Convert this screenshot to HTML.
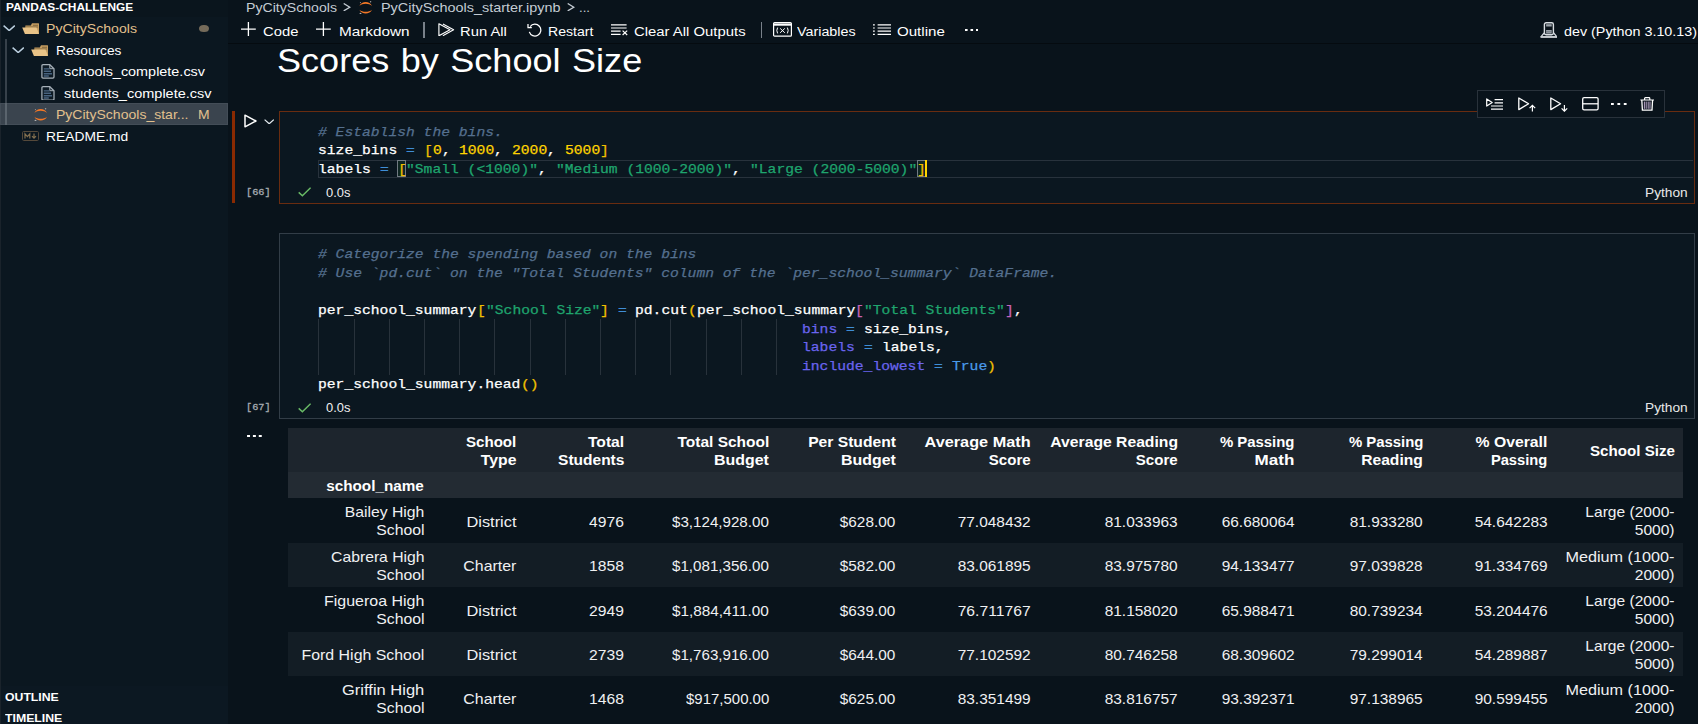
<!DOCTYPE html>
<html lang="en"><head><meta charset="utf-8"><title>PyCitySchools_starter.ipynb - pandas-challenge</title>
<style>
html,body{margin:0;padding:0;background:#09131b;}
body{width:1698px;height:724px;position:relative;overflow:hidden;font-family:"Liberation Sans",sans-serif;}
.b{position:absolute;display:block;}
.t{position:absolute;white-space:pre;display:block;}
</style></head><body>
<aside aria-label="Explorer">
<div class="b" style="left:0px;top:0px;width:228px;height:724px;background:#0b1720;"></div>
<div class="b" style="left:0px;top:0px;width:228px;height:17px;background:#0a151d;"></div>
<div class="b" style="left:0px;top:686px;width:228px;height:38px;background:#0c1822;"></div>
<div class="b" style="left:0px;top:0px;width:1px;height:724px;background:#1a232b;"></div>
<div class="b" style="left:0px;top:103px;width:228px;height:22px;background:#3a444e;border:1px solid #434d57;box-sizing:border-box;"></div>
<div class="b" style="left:5px;top:39px;width:1.8px;height:64px;background:#37414a;"></div>
<div class="b" style="left:5px;top:103px;width:1.8px;height:22px;background:#5a646d;z-index:1"></div>
<div class="b" style="left:199.3px;top:24.6px;width:9.8px;height:7.4px;background:#756b5a;border-radius:50%;"></div>
<svg class="b" style="left:2.6px;top:25px;" width="12.4" height="6.4" viewBox="0 0 12.4 6.4" fill="none"><polyline points="0.6,0.6 6.2,5.6 11.8,0.6" stroke="#bcd0e0" stroke-width="1.45" fill="none"/></svg>
<svg class="b" style="left:11.8px;top:46.5px;" width="12.4" height="6.4" viewBox="0 0 12.4 6.4" fill="none"><polyline points="0.6,0.6 6.2,5.6 11.8,0.6" stroke="#bcd0e0" stroke-width="1.45" fill="none"/></svg>
<svg class="b" style="left:21.7px;top:23px;" width="17.4" height="11.2" viewBox="0 0 17.4 11.2" fill="none"><path d="M10 0.3 H16.4 Q17.2 0.3 17.2 1.1 V10.6 H3.4 V2.6 H8.8 Z" fill="#c39c60"/><path d="M11 1.7 H16 V3 H11 Z" fill="#8f7245"/><path d="M3.6 3.6 H16 V4.4 H3.6 Z" fill="#6f5937"/><path d="M0.2 4.4 H14.4 L17.1 11 H2.9 Z" fill="#e9c387"/></svg>
<svg class="b" style="left:31px;top:44.5px;" width="17.4" height="11.2" viewBox="0 0 17.4 11.2" fill="none"><path d="M10 0.3 H16.4 Q17.2 0.3 17.2 1.1 V10.6 H3.4 V2.6 H8.8 Z" fill="#c39c60"/><path d="M11 1.7 H16 V3 H11 Z" fill="#8f7245"/><path d="M3.6 3.6 H16 V4.4 H3.6 Z" fill="#6f5937"/><path d="M0.2 4.4 H14.4 L17.1 11 H2.9 Z" fill="#e9c387"/></svg>
<svg class="b" style="left:41.1px;top:64.1px;" width="14" height="14.8" viewBox="0 0 14 14.8" fill="none"><path d="M2 0.7 H8.8 L13 4.7 V13 Q13 14.1 11.9 14.1 H2 Q0.9 14.1 0.9 13 V1.8 Q0.9 0.7 2 0.7 Z" stroke="#a6b0b8" stroke-width="1.25" fill="#0d1a24"/><path d="M8.8 0.9 V4.7 H12.8" stroke="#a6b0b8" stroke-width="1" fill="none"/><path d="M2.8 4.9 H8.6 M2.8 7.3 H10 M2.8 9.7 H11 M2.8 12 H7.8" stroke="#48637f" stroke-width="1.4"/></svg>
<svg class="b" style="left:41.1px;top:85.7px;" width="14" height="14.8" viewBox="0 0 14 14.8" fill="none"><path d="M2 0.7 H8.8 L13 4.7 V13 Q13 14.1 11.9 14.1 H2 Q0.9 14.1 0.9 13 V1.8 Q0.9 0.7 2 0.7 Z" stroke="#a6b0b8" stroke-width="1.25" fill="#0d1a24"/><path d="M8.8 0.9 V4.7 H12.8" stroke="#a6b0b8" stroke-width="1" fill="none"/><path d="M2.8 4.9 H8.6 M2.8 7.3 H10 M2.8 9.7 H11 M2.8 12 H7.8" stroke="#48637f" stroke-width="1.4"/></svg>
<svg class="b" style="left:33.6px;top:107.8px;" width="13.4" height="13.6" viewBox="0 0 13.4 13.6" fill="none"><path d="M0.4 4.9 C2.6 -0.2 10.8 -0.2 13 4.9 C10 2.2 3.4 2.2 0.4 4.9 Z" fill="#f37726"/><path d="M0.4 8.7 C2.6 13.8 10.8 13.8 13 8.7 C10 11.4 3.4 11.4 0.4 8.7 Z" fill="#f37726"/><circle cx="11.6" cy="0.8" r="0.75" fill="#9e9e9e"/><circle cx="1.5" cy="12.7" r="0.95" fill="#b0b0b0"/><circle cx="1.4" cy="1.6" r="0.55" fill="#9e9e9e"/></svg>
<svg class="b" style="left:22.2px;top:131.4px;" width="17" height="10" viewBox="0 0 17 10" fill="none"><rect x="0.5" y="0.5" width="16" height="9" rx="1.2" stroke="#55493a" stroke-width="1" fill="none"/><path d="M3 7.4 V2.8 L5.4 5.6 L7.8 2.8 V7.4" stroke="#84704f" stroke-width="1.2" fill="none"/><path d="M12 2.6 V7 M10 5.2 L12 7.2 L14 5.2" stroke="#84704f" stroke-width="1.2" fill="none"/></svg>
<span class="t" style="top:2.00px;font:700 11.2px/11.2px 'Liberation Sans',sans-serif;color:#fff;left:5.80px;transform-origin:0 0;transform:scaleX(1.0622);">PANDAS-CHALLENGE</span>
<span class="t" style="top:23.00px;font:400 12.6px/12.6px 'Liberation Sans',sans-serif;color:#e2c08d;left:46.20px;transform-origin:0 0;transform:scaleX(1.1206);">PyCitySchools</span>
<span class="t" style="top:45.00px;font:400 12.6px/12.6px 'Liberation Sans',sans-serif;color:#ffffff;left:55.60px;transform-origin:0 0;transform:scaleX(1.0863);">Resources</span>
<span class="t" style="top:66.00px;font:400 12.6px/12.6px 'Liberation Sans',sans-serif;color:#ffffff;left:64.30px;transform-origin:0 0;transform:scaleX(1.1445);">schools_complete.csv</span>
<span class="t" style="top:88.00px;font:400 12.6px/12.6px 'Liberation Sans',sans-serif;color:#ffffff;left:64.30px;transform-origin:0 0;transform:scaleX(1.1521);">students_complete.csv</span>
<span class="t" style="top:109.00px;font:400 12.6px/12.6px 'Liberation Sans',sans-serif;color:#e2c08d;left:55.60px;transform-origin:0 0;transform:scaleX(1.1134);">PyCitySchools_star...</span>
<span class="t" style="top:109.00px;font:400 12.2px/12.2px 'Liberation Sans',sans-serif;color:#e2c08d;left:197.60px;transform-origin:0 0;transform:scaleX(1.1422);">M</span>
<span class="t" style="top:131.00px;font:400 12.6px/12.6px 'Liberation Sans',sans-serif;color:#ffffff;left:46.20px;transform-origin:0 0;transform:scaleX(1.0978);">README.md</span>
<span class="t" style="top:692.00px;font:700 11.2px/11.2px 'Liberation Sans',sans-serif;color:#fff;left:5.30px;transform-origin:0 0;transform:scaleX(1.0955);">OUTLINE</span>
<span class="t" style="top:713.00px;font:700 11.2px/11.2px 'Liberation Sans',sans-serif;color:#fff;left:5.30px;transform-origin:0 0;transform:scaleX(1.0973);">TIMELINE</span>
</aside>
<header aria-label="Notebook toolbar">
<div class="b" style="left:228px;top:43.2px;width:1470px;height:1.2px;background:#050b10;"></div>
<svg class="b" style="left:343px;top:3px;" width="7.6" height="8.4" viewBox="0 0 7.6 8.4" fill="none"><polyline points="0.7,0.5 6.8,4.2 0.7,7.9" stroke="#c4ccd4" stroke-width="1.3" fill="none"/></svg>
<svg class="b" style="left:567.4px;top:3px;" width="7.6" height="8.4" viewBox="0 0 7.6 8.4" fill="none"><polyline points="0.7,0.5 6.8,4.2 0.7,7.9" stroke="#c4ccd4" stroke-width="1.3" fill="none"/></svg>
<svg class="b" style="left:358.6px;top:0.6px;" width="13.4" height="13.6" viewBox="0 0 13.4 13.6" fill="none"><path d="M0.4 4.9 C2.6 -0.2 10.8 -0.2 13 4.9 C10 2.2 3.4 2.2 0.4 4.9 Z" fill="#f37726"/><path d="M0.4 8.7 C2.6 13.8 10.8 13.8 13 8.7 C10 11.4 3.4 11.4 0.4 8.7 Z" fill="#f37726"/><circle cx="11.6" cy="0.8" r="0.75" fill="#9e9e9e"/><circle cx="1.5" cy="12.7" r="0.95" fill="#b0b0b0"/><circle cx="1.4" cy="1.6" r="0.55" fill="#9e9e9e"/></svg>
<svg class="b" style="left:241px;top:21.6px;" width="14.8" height="14.2" viewBox="0 0 14.8 14.2" fill="none"><path d="M7.4 0 V14.2 M0 7.1 H14.8" stroke="#fff" stroke-width="1.3"/></svg>
<svg class="b" style="left:316.2px;top:21.6px;" width="14.8" height="14.2" viewBox="0 0 14.8 14.2" fill="none"><path d="M7.4 0 V14.2 M0 7.1 H14.8" stroke="#fff" stroke-width="1.3"/></svg>
<div class="b" style="left:423.4px;top:22px;width:1.5px;height:16px;background:#79818a;"></div>
<div class="b" style="left:760.6px;top:22px;width:1.5px;height:16px;background:#79818a;"></div>
<svg class="b" style="left:438.4px;top:22.8px;" width="16.4" height="13.6" viewBox="0 0 16.4 13.6" fill="none"><path d="M0.9 0.8 V12.8 L12 6.8 Z" stroke="#fff" stroke-width="1.15" fill="none" stroke-linejoin="round"/><path d="M4.9 0.9 L15.6 6.8 L4.9 12.7" stroke="#fff" stroke-width="1.15" fill="none" stroke-linejoin="round"/></svg>
<svg class="b" style="left:526.6px;top:23.4px;" width="15.2" height="13.6" viewBox="0 0 15.2 13.6" fill="none"><path d="M3.2 3.6 A5.9 5.9 0 1 1 2.3 8.9" stroke="#fff" stroke-width="1.25" fill="none"/><path d="M1 0.9 V4.6 H4.8" stroke="#fff" stroke-width="1.25" fill="none"/></svg>
<svg class="b" style="left:611px;top:24px;" width="17" height="11.6" viewBox="0 0 17 11.6" fill="none"><path d="M0 0.8 H15.6 M0 4 H15.6 M0 7.2 H9.6 M0 10.4 H9.6" stroke="#fff" stroke-width="1.2"/><path d="M11.6 6.6 L16.2 11 M16.2 6.6 L11.6 11" stroke="#fff" stroke-width="1.2"/></svg>
<svg class="b" style="left:773.2px;top:21.8px;" width="19" height="14.8" viewBox="0 0 19 14.8" fill="none"><rect x="0.6" y="0.6" width="17.8" height="13.6" rx="1" stroke="#fff" stroke-width="1.2" fill="none"/><path d="M0.6 2.6 H18.4" stroke="#fff" stroke-width="2.2"/><path d="M4.6 5.6 Q3 8.4 4.6 11.4 M14.4 5.6 Q16 8.4 14.4 11.4 M7.2 6.4 L11.8 10.8 M11.8 6.4 L7.2 10.8" stroke="#fff" stroke-width="1" fill="none"/></svg>
<svg class="b" style="left:872.6px;top:23.6px;" width="18" height="11.4" viewBox="0 0 18 11.4" fill="none"><path d="M4.6 0.8 H18 M4.6 4 H18 M4.6 7.2 H18 M4.6 10.4 H18" stroke="#fff" stroke-width="1.2"/><path d="M0 0.8 H1.8 M0 4 H1.8 M0 7.2 H1.8 M0 10.4 H1.8" stroke="#fff" stroke-width="1.2"/></svg>
<svg class="b" style="left:964.6px;top:28.9px;" width="13.6" height="2" viewBox="0 0 13.6 2" fill="none"><rect x="0" y="0" width="2.6" height="2" fill="#fff"/><rect x="5.5" y="0" width="2.6" height="2" fill="#fff"/><rect x="11" y="0" width="2.6" height="2" fill="#fff"/></svg>
<svg class="b" style="left:1539.6px;top:21.6px;" width="17.8" height="16" viewBox="0 0 17.8 16" fill="none"><path d="M4.1 11 L0.9 14.9 H16.9 L13.7 11" stroke="#d3d8dd" stroke-width="1.2" fill="none" stroke-linejoin="round"/><path d="M0.7 15 H17.1" stroke="#c9ced3" stroke-width="1.7"/><rect x="4.4" y="0.7" width="9" height="12" rx="1.7" stroke="#d8dde2" stroke-width="1.4" fill="#0a131b"/><rect x="6.1" y="2.2" width="5.6" height="2.3" fill="#9aa2a9"/><rect x="6.1" y="8" width="5.6" height="3.6" fill="#9aa2a9"/><path d="M6.1 9.8 H11.7" stroke="#5d666e" stroke-width="0.7"/></svg>
<span class="t" style="top:2.00px;font:400 12.6px/12.6px 'Liberation Sans',sans-serif;color:#c4ccd4;left:246.40px;transform-origin:0 0;transform:scaleX(1.1206);">PyCitySchools</span>
<span class="t" style="top:2.00px;font:400 12.6px/12.6px 'Liberation Sans',sans-serif;color:#c4ccd4;left:380.60px;transform-origin:0 0;transform:scaleX(1.1454);">PyCitySchools_starter.ipynb</span>
<span class="t" style="top:2.00px;font:400 12.6px/12.6px 'Liberation Sans',sans-serif;color:#c4ccd4;left:578.60px;transform-origin:0 0;transform:scaleX(1.0476);">...</span>
<span class="t" style="top:26.00px;font:400 12.5px/12.5px 'Liberation Sans',sans-serif;color:#fff;left:262.80px;transform-origin:0 0;transform:scaleX(1.1843);">Code</span>
<span class="t" style="top:26.00px;font:400 12.5px/12.5px 'Liberation Sans',sans-serif;color:#fff;left:339.00px;transform-origin:0 0;transform:scaleX(1.2242);">Markdown</span>
<span class="t" style="top:26.00px;font:400 12.5px/12.5px 'Liberation Sans',sans-serif;color:#fff;left:460.20px;transform-origin:0 0;transform:scaleX(1.1815);">Run All</span>
<span class="t" style="top:26.00px;font:400 12.5px/12.5px 'Liberation Sans',sans-serif;color:#fff;left:548.00px;transform-origin:0 0;transform:scaleX(1.1266);">Restart</span>
<span class="t" style="top:26.00px;font:400 12.5px/12.5px 'Liberation Sans',sans-serif;color:#fff;left:634.40px;transform-origin:0 0;transform:scaleX(1.1898);">Clear All Outputs</span>
<span class="t" style="top:26.00px;font:400 12.5px/12.5px 'Liberation Sans',sans-serif;color:#fff;left:797.00px;transform-origin:0 0;transform:scaleX(1.1448);">Variables</span>
<span class="t" style="top:26.00px;font:400 12.5px/12.5px 'Liberation Sans',sans-serif;color:#fff;left:896.60px;transform-origin:0 0;transform:scaleX(1.2068);">Outline</span>
<span class="t" style="top:26.00px;font:400 12.5px/12.5px 'Liberation Sans',sans-serif;color:#fff;left:1564.00px;transform-origin:0 0;transform:scaleX(1.1461);">dev (Python 3.10.13)</span>
</header>
<section aria-label="Markdown cell">
<span class="t" style="top:45.00px;font:400 32.8px/32.8px 'Liberation Sans',sans-serif;color:#ffffff;left:277.00px;transform-origin:0 0;transform:scaleX(1.0999);word-spacing:1.3px;">Scores by School Size</span>
</section>
<section aria-label="Code cells">
<div class="b" style="left:232px;top:110.8px;width:3.1px;height:92.2px;background:#8a2a02;"></div>
<div class="b" style="left:279px;top:111px;width:1416px;height:93px;background:#0b1720;border:1px solid #692c10;box-sizing:border-box;"></div>
<div class="b" style="left:279px;top:233px;width:1416px;height:186px;background:#0b1720;border:1px solid #323d47;box-sizing:border-box;"></div>
<svg class="b" style="left:244.4px;top:114.2px;" width="13.4" height="14" viewBox="0 0 13.4 14" fill="none"><path d="M1 1.2 V12.8 L12 7 Z" stroke="#fff" stroke-width="1.5" fill="none" stroke-linejoin="round"/></svg>
<svg class="b" style="left:263.8px;top:118.8px;" width="10.4" height="5.6" viewBox="0 0 10.4 5.6" fill="none"><polyline points="0.6,0.6 5.2,4.8 9.8,0.6" stroke="#e4ebf0" stroke-width="1.2" fill="none"/></svg>
<div class="b" style="left:1477px;top:90px;width:188px;height:28px;background:#09131b;border:1px solid #29323b;box-sizing:border-box;"></div>
<svg class="b" style="left:1485.6px;top:97.8px;" width="17.6" height="12" viewBox="0 0 17.6 12" fill="none"><path d="M0.7 0.9 V8.1 L6.2 4.5 Z" stroke="#ffffff" stroke-width="1.2" fill="none" stroke-linejoin="round"/><path d="M8.6 1.6 H17.6 M8.6 4.8 H17.6 M5 8 H17.6 M5 11.2 H17.6" stroke="#ffffff" stroke-width="1.2"/></svg>
<svg class="b" style="left:1517.6px;top:97px;" width="18.6" height="15" viewBox="0 0 18.6 15" fill="none"><path d="M0.8 1 V12.6 L10.6 6.8 Z" stroke="#ffffff" stroke-width="1.3" fill="none" stroke-linejoin="round"/><path d="M14.4 14.6 V8.6 M11.6 11.2 L14.4 8.4 L17.2 11.2" stroke="#ffffff" stroke-width="1.2" fill="none"/></svg>
<svg class="b" style="left:1549.8px;top:97px;" width="18.6" height="15" viewBox="0 0 18.6 15" fill="none"><path d="M0.8 1 V12.6 L10.6 6.8 Z" stroke="#ffffff" stroke-width="1.3" fill="none" stroke-linejoin="round"/><path d="M14.4 8 V14 M11.6 11.4 L14.4 14.2 L17.2 11.4" stroke="#ffffff" stroke-width="1.2" fill="none"/></svg>
<svg class="b" style="left:1582.4px;top:97px;" width="16.8" height="13.6" viewBox="0 0 16.8 13.6" fill="none"><rect x="0.7" y="0.7" width="15.4" height="12.2" rx="1.4" stroke="#ffffff" stroke-width="1.3" fill="none"/><path d="M0.7 6.8 H16.1" stroke="#ffffff" stroke-width="1.3"/></svg>
<svg class="b" style="left:1611.2px;top:103.2px;" width="15.6" height="2" viewBox="0 0 15.6 2" fill="none"><rect x="0" y="0" width="2.8" height="2" fill="#fff"/><rect x="6.4" y="0" width="2.8" height="2" fill="#fff"/><rect x="12.8" y="0" width="2.8" height="2" fill="#fff"/></svg>
<svg class="b" style="left:1640px;top:96.6px;" width="14.4" height="14" viewBox="0 0 14.4 14" fill="none"><path d="M0.4 3 H14 M4.6 3 V1.4 Q4.6 0.7 5.4 0.7 H9 Q9.8 0.7 9.8 1.4 V3" stroke="#ffffff" stroke-width="1.2" fill="none"/><path d="M1.8 3 L2.4 13.2 H12 L12.6 3" stroke="#ffffff" stroke-width="1.3" fill="none"/><path d="M4.4 4.6 V11.8 M6.2 4.6 V11.8 M8.2 4.6 V11.8 M10 4.6 V11.8" stroke="#b9a6c8" stroke-width="1"/></svg>
<div class="b" style="left:318.4px;top:160px;width:1375px;height:18px;border:1px solid #28323c;box-sizing:border-box;border-right:none;"></div>
<div class="b" style="left:396.9px;top:160.4px;width:9.4px;height:16.8px;background:#0f2622;border:1px solid #717a82;box-sizing:border-box;"></div>
<div class="b" style="left:916.5px;top:160.4px;width:9.0px;height:16.8px;background:#0f2622;border:1px solid #717a82;box-sizing:border-box;"></div>
<div class="b" style="left:925.2px;top:160.2px;width:2.2px;height:17.2px;background:#ffd400;"></div>
<div class="b" style="left:318.40000000000003px;top:319.3px;width:1.1px;height:55.4px;background:#28323b;"></div>
<div class="b" style="left:353.6px;top:319.3px;width:1.1px;height:55.4px;background:#28323b;"></div>
<div class="b" style="left:388.80000000000007px;top:319.3px;width:1.1px;height:55.4px;background:#28323b;"></div>
<div class="b" style="left:424.00000000000006px;top:319.3px;width:1.1px;height:55.4px;background:#28323b;"></div>
<div class="b" style="left:459.20000000000005px;top:319.3px;width:1.1px;height:55.4px;background:#28323b;"></div>
<div class="b" style="left:494.40000000000003px;top:319.3px;width:1.1px;height:55.4px;background:#28323b;"></div>
<div class="b" style="left:529.6px;top:319.3px;width:1.1px;height:55.4px;background:#28323b;"></div>
<div class="b" style="left:564.8000000000001px;top:319.3px;width:1.1px;height:55.4px;background:#28323b;"></div>
<div class="b" style="left:600.0px;top:319.3px;width:1.1px;height:55.4px;background:#28323b;"></div>
<div class="b" style="left:635.2px;top:319.3px;width:1.1px;height:55.4px;background:#28323b;"></div>
<div class="b" style="left:670.4000000000001px;top:319.3px;width:1.1px;height:55.4px;background:#28323b;"></div>
<div class="b" style="left:705.6000000000001px;top:319.3px;width:1.1px;height:55.4px;background:#28323b;"></div>
<div class="b" style="left:740.8000000000001px;top:319.3px;width:1.1px;height:55.4px;background:#28323b;"></div>
<div class="b" style="left:776.0px;top:319.3px;width:1.1px;height:55.4px;background:#28323b;"></div>
<svg class="b" style="left:298px;top:187.4px;" width="13.4" height="9.8" viewBox="0 0 13.4 9.8" fill="none"><polyline points="0.7,5.4 4.4,8.8 12.6,0.7" stroke="#69bb66" stroke-width="1.5" fill="none"/></svg>
<svg class="b" style="left:298px;top:402.8px;" width="13.4" height="9.8" viewBox="0 0 13.4 9.8" fill="none"><polyline points="0.7,5.4 4.4,8.8 12.6,0.7" stroke="#69bb66" stroke-width="1.5" fill="none"/></svg>
<svg class="b" style="left:247.2px;top:435px;" width="15" height="2.2" viewBox="0 0 15 2.2" fill="none"><rect x="0" y="0" width="3" height="2.2" fill="#fff"/><rect x="5.9" y="0" width="3" height="2.2" fill="#fff"/><rect x="11.8" y="0" width="3" height="2.2" fill="#fff"/></svg>
<span class="t" style="top:126.00px;font:italic 400 13.5px/13.5px 'Liberation Mono',monospace;color:#55708f;left:318.30px;transform-origin:0 0;transform:scaleX(1.0862);-webkit-text-stroke:0.25px #55708f;"># Establish the bins.</span>
<span class="t" style="top:144.00px;font:400 13.5px/13.5px 'Liberation Mono',monospace;color:#ffffff;left:318.30px;transform-origin:0 0;transform:scaleX(1.0862);-webkit-text-stroke:0.25px #ffffff;">size_bins</span>
<span class="t" style="top:144.00px;font:400 13.5px/13.5px 'Liberation Mono',monospace;color:#3f8ed6;left:406.30px;transform-origin:0 0;transform:scaleX(1.0862);-webkit-text-stroke:0.25px #3f8ed6;">=</span>
<span class="t" style="top:144.00px;font:400 13.5px/13.5px 'Liberation Mono',monospace;color:#f0c000;left:423.90px;transform-origin:0 0;transform:scaleX(1.0862);-webkit-text-stroke:0.25px #f0c000;">[</span>
<span class="t" style="top:144.00px;font:400 13.5px/13.5px 'Liberation Mono',monospace;color:#ffd500;left:432.70px;transform-origin:0 0;transform:scaleX(1.0862);-webkit-text-stroke:0.25px #ffd500;">0</span>
<span class="t" style="top:144.00px;font:400 13.5px/13.5px 'Liberation Mono',monospace;color:#ffffff;left:441.50px;transform-origin:0 0;transform:scaleX(1.0862);-webkit-text-stroke:0.25px #ffffff;">,</span>
<span class="t" style="top:144.00px;font:400 13.5px/13.5px 'Liberation Mono',monospace;color:#ffd500;left:459.10px;transform-origin:0 0;transform:scaleX(1.0862);-webkit-text-stroke:0.25px #ffd500;">1000</span>
<span class="t" style="top:144.00px;font:400 13.5px/13.5px 'Liberation Mono',monospace;color:#ffffff;left:494.30px;transform-origin:0 0;transform:scaleX(1.0862);-webkit-text-stroke:0.25px #ffffff;">,</span>
<span class="t" style="top:144.00px;font:400 13.5px/13.5px 'Liberation Mono',monospace;color:#ffd500;left:511.90px;transform-origin:0 0;transform:scaleX(1.0862);-webkit-text-stroke:0.25px #ffd500;">2000</span>
<span class="t" style="top:144.00px;font:400 13.5px/13.5px 'Liberation Mono',monospace;color:#ffffff;left:547.10px;transform-origin:0 0;transform:scaleX(1.0862);-webkit-text-stroke:0.25px #ffffff;">,</span>
<span class="t" style="top:144.00px;font:400 13.5px/13.5px 'Liberation Mono',monospace;color:#ffd500;left:564.70px;transform-origin:0 0;transform:scaleX(1.0862);-webkit-text-stroke:0.25px #ffd500;">5000</span>
<span class="t" style="top:144.00px;font:400 13.5px/13.5px 'Liberation Mono',monospace;color:#f0c000;left:599.90px;transform-origin:0 0;transform:scaleX(1.0862);-webkit-text-stroke:0.25px #f0c000;">]</span>
<span class="t" style="top:163.00px;font:400 13.5px/13.5px 'Liberation Mono',monospace;color:#ffffff;left:318.30px;transform-origin:0 0;transform:scaleX(1.0862);-webkit-text-stroke:0.25px #ffffff;">labels</span>
<span class="t" style="top:163.00px;font:400 13.5px/13.5px 'Liberation Mono',monospace;color:#3f8ed6;left:379.90px;transform-origin:0 0;transform:scaleX(1.0862);-webkit-text-stroke:0.25px #3f8ed6;">=</span>
<span class="t" style="top:163.00px;font:400 13.5px/13.5px 'Liberation Mono',monospace;color:#f0c000;left:397.50px;transform-origin:0 0;transform:scaleX(1.0862);-webkit-text-stroke:0.25px #f0c000;">[</span>
<span class="t" style="top:163.00px;font:400 13.5px/13.5px 'Liberation Mono',monospace;color:#1fa56e;left:406.30px;transform-origin:0 0;transform:scaleX(1.0862);-webkit-text-stroke:0.25px #1fa56e;">&quot;Small (&lt;1000)&quot;</span>
<span class="t" style="top:163.00px;font:400 13.5px/13.5px 'Liberation Mono',monospace;color:#ffffff;left:538.30px;transform-origin:0 0;transform:scaleX(1.0862);-webkit-text-stroke:0.25px #ffffff;">,</span>
<span class="t" style="top:163.00px;font:400 13.5px/13.5px 'Liberation Mono',monospace;color:#1fa56e;left:555.90px;transform-origin:0 0;transform:scaleX(1.0862);-webkit-text-stroke:0.25px #1fa56e;">&quot;Medium (1000-2000)&quot;</span>
<span class="t" style="top:163.00px;font:400 13.5px/13.5px 'Liberation Mono',monospace;color:#ffffff;left:731.90px;transform-origin:0 0;transform:scaleX(1.0862);-webkit-text-stroke:0.25px #ffffff;">,</span>
<span class="t" style="top:163.00px;font:400 13.5px/13.5px 'Liberation Mono',monospace;color:#1fa56e;left:749.50px;transform-origin:0 0;transform:scaleX(1.0862);-webkit-text-stroke:0.25px #1fa56e;">&quot;Large (2000-5000)&quot;</span>
<span class="t" style="top:163.00px;font:400 13.5px/13.5px 'Liberation Mono',monospace;color:#f0c000;left:916.70px;transform-origin:0 0;transform:scaleX(1.0862);-webkit-text-stroke:0.25px #f0c000;">]</span>
<span class="t" style="top:248.00px;font:italic 400 13.5px/13.5px 'Liberation Mono',monospace;color:#55708f;left:318.30px;transform-origin:0 0;transform:scaleX(1.0862);-webkit-text-stroke:0.25px #55708f;"># Categorize the spending based on the bins</span>
<span class="t" style="top:267.00px;font:italic 400 13.5px/13.5px 'Liberation Mono',monospace;color:#55708f;left:318.30px;transform-origin:0 0;transform:scaleX(1.0862);-webkit-text-stroke:0.25px #55708f;"># Use `pd.cut` on the &quot;Total Students&quot; column of the `per_school_summary` DataFrame.</span>
<span class="t" style="top:304.00px;font:400 13.5px/13.5px 'Liberation Mono',monospace;color:#ffffff;left:318.30px;transform-origin:0 0;transform:scaleX(1.0862);-webkit-text-stroke:0.25px #ffffff;">per_school_summary</span>
<span class="t" style="top:304.00px;font:400 13.5px/13.5px 'Liberation Mono',monospace;color:#f0c000;left:476.70px;transform-origin:0 0;transform:scaleX(1.0862);-webkit-text-stroke:0.25px #f0c000;">[</span>
<span class="t" style="top:304.00px;font:400 13.5px/13.5px 'Liberation Mono',monospace;color:#1fa56e;left:485.50px;transform-origin:0 0;transform:scaleX(1.0862);-webkit-text-stroke:0.25px #1fa56e;">&quot;School Size&quot;</span>
<span class="t" style="top:304.00px;font:400 13.5px/13.5px 'Liberation Mono',monospace;color:#f0c000;left:599.90px;transform-origin:0 0;transform:scaleX(1.0862);-webkit-text-stroke:0.25px #f0c000;">]</span>
<span class="t" style="top:304.00px;font:400 13.5px/13.5px 'Liberation Mono',monospace;color:#3f8ed6;left:617.50px;transform-origin:0 0;transform:scaleX(1.0862);-webkit-text-stroke:0.25px #3f8ed6;">=</span>
<span class="t" style="top:304.00px;font:400 13.5px/13.5px 'Liberation Mono',monospace;color:#ffffff;left:635.10px;transform-origin:0 0;transform:scaleX(1.0862);-webkit-text-stroke:0.25px #ffffff;">pd.cut</span>
<span class="t" style="top:304.00px;font:400 13.5px/13.5px 'Liberation Mono',monospace;color:#f0c000;left:687.90px;transform-origin:0 0;transform:scaleX(1.0862);-webkit-text-stroke:0.25px #f0c000;">(</span>
<span class="t" style="top:304.00px;font:400 13.5px/13.5px 'Liberation Mono',monospace;color:#ffffff;left:696.70px;transform-origin:0 0;transform:scaleX(1.0862);-webkit-text-stroke:0.25px #ffffff;">per_school_summary</span>
<span class="t" style="top:304.00px;font:400 13.5px/13.5px 'Liberation Mono',monospace;color:#c864b8;left:855.10px;transform-origin:0 0;transform:scaleX(1.0862);-webkit-text-stroke:0.25px #c864b8;">[</span>
<span class="t" style="top:304.00px;font:400 13.5px/13.5px 'Liberation Mono',monospace;color:#1fa56e;left:863.90px;transform-origin:0 0;transform:scaleX(1.0862);-webkit-text-stroke:0.25px #1fa56e;">&quot;Total Students&quot;</span>
<span class="t" style="top:304.00px;font:400 13.5px/13.5px 'Liberation Mono',monospace;color:#c864b8;left:1004.70px;transform-origin:0 0;transform:scaleX(1.0862);-webkit-text-stroke:0.25px #c864b8;">]</span>
<span class="t" style="top:304.00px;font:400 13.5px/13.5px 'Liberation Mono',monospace;color:#ffffff;left:1013.50px;transform-origin:0 0;transform:scaleX(1.0862);-webkit-text-stroke:0.25px #ffffff;">,</span>
<span class="t" style="top:323.00px;font:400 13.5px/13.5px 'Liberation Mono',monospace;color:#6a64ee;left:802.30px;transform-origin:0 0;transform:scaleX(1.0862);-webkit-text-stroke:0.25px #6a64ee;">bins</span>
<span class="t" style="top:323.00px;font:400 13.5px/13.5px 'Liberation Mono',monospace;color:#3f8ed6;left:846.30px;transform-origin:0 0;transform:scaleX(1.0862);-webkit-text-stroke:0.25px #3f8ed6;">=</span>
<span class="t" style="top:323.00px;font:400 13.5px/13.5px 'Liberation Mono',monospace;color:#ffffff;left:863.90px;transform-origin:0 0;transform:scaleX(1.0862);-webkit-text-stroke:0.25px #ffffff;">size_bins,</span>
<span class="t" style="top:341.00px;font:400 13.5px/13.5px 'Liberation Mono',monospace;color:#6a64ee;left:802.30px;transform-origin:0 0;transform:scaleX(1.0862);-webkit-text-stroke:0.25px #6a64ee;">labels</span>
<span class="t" style="top:341.00px;font:400 13.5px/13.5px 'Liberation Mono',monospace;color:#3f8ed6;left:863.90px;transform-origin:0 0;transform:scaleX(1.0862);-webkit-text-stroke:0.25px #3f8ed6;">=</span>
<span class="t" style="top:341.00px;font:400 13.5px/13.5px 'Liberation Mono',monospace;color:#ffffff;left:881.50px;transform-origin:0 0;transform:scaleX(1.0862);-webkit-text-stroke:0.25px #ffffff;">labels,</span>
<span class="t" style="top:360.00px;font:400 13.5px/13.5px 'Liberation Mono',monospace;color:#6a64ee;left:802.30px;transform-origin:0 0;transform:scaleX(1.0862);-webkit-text-stroke:0.25px #6a64ee;">include_lowest</span>
<span class="t" style="top:360.00px;font:400 13.5px/13.5px 'Liberation Mono',monospace;color:#3f8ed6;left:934.30px;transform-origin:0 0;transform:scaleX(1.0862);-webkit-text-stroke:0.25px #3f8ed6;">=</span>
<span class="t" style="top:360.00px;font:400 13.5px/13.5px 'Liberation Mono',monospace;color:#4a9bea;left:951.90px;transform-origin:0 0;transform:scaleX(1.0862);-webkit-text-stroke:0.25px #4a9bea;">True</span>
<span class="t" style="top:360.00px;font:400 13.5px/13.5px 'Liberation Mono',monospace;color:#f0c000;left:987.10px;transform-origin:0 0;transform:scaleX(1.0862);-webkit-text-stroke:0.25px #f0c000;">)</span>
<span class="t" style="top:378.00px;font:400 13.5px/13.5px 'Liberation Mono',monospace;color:#ffffff;left:318.30px;transform-origin:0 0;transform:scaleX(1.0862);-webkit-text-stroke:0.25px #ffffff;">per_school_summary.head</span>
<span class="t" style="top:378.00px;font:400 13.5px/13.5px 'Liberation Mono',monospace;color:#f0c000;left:520.70px;transform-origin:0 0;transform:scaleX(1.0862);-webkit-text-stroke:0.25px #f0c000;">()</span>
<span class="t" style="top:188.00px;font:400 9.6px/9.6px 'Liberation Mono',monospace;color:#a4aab0;left:246.00px;transform-origin:0 0;transform:scaleX(1.0681);-webkit-text-stroke:0.3px #a4aab0;">[66]</span>
<span class="t" style="top:403.00px;font:400 9.6px/9.6px 'Liberation Mono',monospace;color:#a4aab0;left:246.00px;transform-origin:0 0;transform:scaleX(1.0681);-webkit-text-stroke:0.3px #a4aab0;">[67]</span>
<span class="t" style="top:187.00px;font:400 12.4px/12.4px 'Liberation Sans',sans-serif;color:#f0f0f0;left:325.80px;transform-origin:0 0;transform:scaleX(1.0418);">0.0s</span>
<span class="t" style="top:402.00px;font:400 12.4px/12.4px 'Liberation Sans',sans-serif;color:#f0f0f0;left:325.80px;transform-origin:0 0;transform:scaleX(1.0418);">0.0s</span>
<span class="t" style="top:187.00px;font:400 12.4px/12.4px 'Liberation Sans',sans-serif;color:#e8e8e8;left:1644.60px;transform-origin:0 0;transform:scaleX(1.1043);">Python</span>
<span class="t" style="top:402.00px;font:400 12.4px/12.4px 'Liberation Sans',sans-serif;color:#e8e8e8;left:1644.60px;transform-origin:0 0;transform:scaleX(1.1043);">Python</span>
</section>
<section aria-label="Cell output">
<div class="b" style="left:288px;top:428px;width:1394.6px;height:44px;background:#1d252d;"></div>
<div class="b" style="left:288px;top:472px;width:1394.6px;height:26px;background:#232b33;"></div>
<div class="b" style="left:288px;top:498.2px;width:1394.6px;height:44.650000000000006px;background:#09131b;"></div>
<div class="b" style="left:288px;top:542.65px;width:1394.6px;height:44.650000000000006px;background:#131d25;"></div>
<div class="b" style="left:288px;top:587.1px;width:1394.6px;height:44.650000000000006px;background:#09131b;"></div>
<div class="b" style="left:288px;top:631.55px;width:1394.6px;height:44.650000000000006px;background:#131d25;"></div>
<div class="b" style="left:288px;top:676.0px;width:1394.6px;height:44.650000000000006px;background:#09131b;"></div>
<span class="t" style="top:436.00px;font:700 13.9px/13.9px 'Liberation Sans',sans-serif;color:#fff;right:1181.50px;transform-origin:100% 0;transform:scaleX(1.0883);">School</span>
<span class="t" style="top:454.00px;font:700 13.9px/13.9px 'Liberation Sans',sans-serif;color:#fff;right:1181.50px;transform-origin:100% 0;transform:scaleX(1.1341);">Type</span>
<span class="t" style="top:436.00px;font:700 13.9px/13.9px 'Liberation Sans',sans-serif;color:#fff;right:1074.00px;transform-origin:100% 0;transform:scaleX(1.1258);">Total</span>
<span class="t" style="top:454.00px;font:700 13.9px/13.9px 'Liberation Sans',sans-serif;color:#fff;right:1074.00px;transform-origin:100% 0;transform:scaleX(1.1174);">Students</span>
<span class="t" style="top:436.00px;font:700 13.9px/13.9px 'Liberation Sans',sans-serif;color:#fff;right:928.80px;transform-origin:100% 0;transform:scaleX(1.1153);">Total School</span>
<span class="t" style="top:454.00px;font:700 13.9px/13.9px 'Liberation Sans',sans-serif;color:#fff;right:928.80px;transform-origin:100% 0;transform:scaleX(1.1454);">Budget</span>
<span class="t" style="top:436.00px;font:700 13.9px/13.9px 'Liberation Sans',sans-serif;color:#fff;right:802.40px;transform-origin:100% 0;transform:scaleX(1.1263);">Per Student</span>
<span class="t" style="top:454.00px;font:700 13.9px/13.9px 'Liberation Sans',sans-serif;color:#fff;right:802.40px;transform-origin:100% 0;transform:scaleX(1.1454);">Budget</span>
<span class="t" style="top:436.00px;font:700 13.9px/13.9px 'Liberation Sans',sans-serif;color:#fff;right:667.60px;transform-origin:100% 0;transform:scaleX(1.1703);">Average Math</span>
<span class="t" style="top:454.00px;font:700 13.9px/13.9px 'Liberation Sans',sans-serif;color:#fff;right:667.60px;transform-origin:100% 0;transform:scaleX(1.0826);">Score</span>
<span class="t" style="top:436.00px;font:700 13.9px/13.9px 'Liberation Sans',sans-serif;color:#fff;right:520.30px;transform-origin:100% 0;transform:scaleX(1.1295);">Average Reading</span>
<span class="t" style="top:454.00px;font:700 13.9px/13.9px 'Liberation Sans',sans-serif;color:#fff;right:520.30px;transform-origin:100% 0;transform:scaleX(1.0826);">Score</span>
<span class="t" style="top:436.00px;font:700 13.9px/13.9px 'Liberation Sans',sans-serif;color:#fff;right:403.50px;transform-origin:100% 0;transform:scaleX(1.0736);">% Passing</span>
<span class="t" style="top:454.00px;font:700 13.9px/13.9px 'Liberation Sans',sans-serif;color:#fff;right:403.50px;transform-origin:100% 0;transform:scaleX(1.2276);">Math</span>
<span class="t" style="top:436.00px;font:700 13.9px/13.9px 'Liberation Sans',sans-serif;color:#fff;right:275.00px;transform-origin:100% 0;transform:scaleX(1.0736);">% Passing</span>
<span class="t" style="top:454.00px;font:700 13.9px/13.9px 'Liberation Sans',sans-serif;color:#fff;right:275.00px;transform-origin:100% 0;transform:scaleX(1.1242);">Reading</span>
<span class="t" style="top:436.00px;font:700 13.9px/13.9px 'Liberation Sans',sans-serif;color:#fff;right:150.80px;transform-origin:100% 0;transform:scaleX(1.1338);">% Overall</span>
<span class="t" style="top:454.00px;font:700 13.9px/13.9px 'Liberation Sans',sans-serif;color:#fff;right:150.80px;transform-origin:100% 0;transform:scaleX(1.0585);">Passing</span>
<span class="t" style="top:445.00px;font:700 13.9px/13.9px 'Liberation Sans',sans-serif;color:#fff;right:23.50px;transform-origin:100% 0;transform:scaleX(1.0902);">School Size</span>
<span class="t" style="top:480.00px;font:700 13.9px/13.9px 'Liberation Sans',sans-serif;color:#fff;right:1273.80px;transform-origin:100% 0;transform:scaleX(1.0993);">school_name</span>
<span class="t" style="top:506.00px;font:400 13.9px/13.9px 'Liberation Sans',sans-serif;color:#eff0f2;right:1273.80px;transform-origin:100% 0;transform:scaleX(1.1328);">Bailey High</span>
<span class="t" style="top:524.00px;font:400 13.9px/13.9px 'Liberation Sans',sans-serif;color:#eff0f2;right:1273.80px;transform-origin:100% 0;transform:scaleX(1.1345);">School</span>
<span class="t" style="top:516.00px;font:400 13.9px/13.9px 'Liberation Sans',sans-serif;color:#eff0f2;right:1181.50px;transform-origin:100% 0;transform:scaleX(1.1778);">District</span>
<span class="t" style="top:516.00px;font:400 13.9px/13.9px 'Liberation Sans',sans-serif;color:#eff0f2;right:1074.00px;transform-origin:100% 0;transform:scaleX(1.1260);">4976</span>
<span class="t" style="top:516.00px;font:400 13.9px/13.9px 'Liberation Sans',sans-serif;color:#eff0f2;right:928.80px;transform-origin:100% 0;transform:scaleX(1.0896);">$3,124,928.00</span>
<span class="t" style="top:516.00px;font:400 13.9px/13.9px 'Liberation Sans',sans-serif;color:#eff0f2;right:802.40px;transform-origin:100% 0;transform:scaleX(1.1032);">$628.00</span>
<span class="t" style="top:516.00px;font:400 13.9px/13.9px 'Liberation Sans',sans-serif;color:#eff0f2;right:667.60px;transform-origin:100% 0;transform:scaleX(1.1116);">77.048432</span>
<span class="t" style="top:516.00px;font:400 13.9px/13.9px 'Liberation Sans',sans-serif;color:#eff0f2;right:520.30px;transform-origin:100% 0;transform:scaleX(1.1116);">81.033963</span>
<span class="t" style="top:516.00px;font:400 13.9px/13.9px 'Liberation Sans',sans-serif;color:#eff0f2;right:403.50px;transform-origin:100% 0;transform:scaleX(1.1116);">66.680064</span>
<span class="t" style="top:516.00px;font:400 13.9px/13.9px 'Liberation Sans',sans-serif;color:#eff0f2;right:275.00px;transform-origin:100% 0;transform:scaleX(1.1116);">81.933280</span>
<span class="t" style="top:516.00px;font:400 13.9px/13.9px 'Liberation Sans',sans-serif;color:#eff0f2;right:150.80px;transform-origin:100% 0;transform:scaleX(1.1116);">54.642283</span>
<span class="t" style="top:506.00px;font:400 13.9px/13.9px 'Liberation Sans',sans-serif;color:#eff0f2;right:23.50px;transform-origin:100% 0;transform:scaleX(1.1214);">Large (2000-</span>
<span class="t" style="top:524.00px;font:400 13.9px/13.9px 'Liberation Sans',sans-serif;color:#eff0f2;right:23.50px;transform-origin:100% 0;transform:scaleX(1.1201);">5000)</span>
<span class="t" style="top:551.00px;font:400 13.9px/13.9px 'Liberation Sans',sans-serif;color:#eff0f2;right:1273.80px;transform-origin:100% 0;transform:scaleX(1.1328);">Cabrera High</span>
<span class="t" style="top:569.00px;font:400 13.9px/13.9px 'Liberation Sans',sans-serif;color:#eff0f2;right:1273.80px;transform-origin:100% 0;transform:scaleX(1.1345);">School</span>
<span class="t" style="top:560.00px;font:400 13.9px/13.9px 'Liberation Sans',sans-serif;color:#eff0f2;right:1181.50px;transform-origin:100% 0;transform:scaleX(1.1440);">Charter</span>
<span class="t" style="top:560.00px;font:400 13.9px/13.9px 'Liberation Sans',sans-serif;color:#eff0f2;right:1074.00px;transform-origin:100% 0;transform:scaleX(1.1260);">1858</span>
<span class="t" style="top:560.00px;font:400 13.9px/13.9px 'Liberation Sans',sans-serif;color:#eff0f2;right:928.80px;transform-origin:100% 0;transform:scaleX(1.0896);">$1,081,356.00</span>
<span class="t" style="top:560.00px;font:400 13.9px/13.9px 'Liberation Sans',sans-serif;color:#eff0f2;right:802.40px;transform-origin:100% 0;transform:scaleX(1.1032);">$582.00</span>
<span class="t" style="top:560.00px;font:400 13.9px/13.9px 'Liberation Sans',sans-serif;color:#eff0f2;right:667.60px;transform-origin:100% 0;transform:scaleX(1.1116);">83.061895</span>
<span class="t" style="top:560.00px;font:400 13.9px/13.9px 'Liberation Sans',sans-serif;color:#eff0f2;right:520.30px;transform-origin:100% 0;transform:scaleX(1.1116);">83.975780</span>
<span class="t" style="top:560.00px;font:400 13.9px/13.9px 'Liberation Sans',sans-serif;color:#eff0f2;right:403.50px;transform-origin:100% 0;transform:scaleX(1.1116);">94.133477</span>
<span class="t" style="top:560.00px;font:400 13.9px/13.9px 'Liberation Sans',sans-serif;color:#eff0f2;right:275.00px;transform-origin:100% 0;transform:scaleX(1.1116);">97.039828</span>
<span class="t" style="top:560.00px;font:400 13.9px/13.9px 'Liberation Sans',sans-serif;color:#eff0f2;right:150.80px;transform-origin:100% 0;transform:scaleX(1.1116);">91.334769</span>
<span class="t" style="top:551.00px;font:400 13.9px/13.9px 'Liberation Sans',sans-serif;color:#eff0f2;right:23.50px;transform-origin:100% 0;transform:scaleX(1.1668);">Medium (1000-</span>
<span class="t" style="top:569.00px;font:400 13.9px/13.9px 'Liberation Sans',sans-serif;color:#eff0f2;right:23.50px;transform-origin:100% 0;transform:scaleX(1.1201);">2000)</span>
<span class="t" style="top:595.00px;font:400 13.9px/13.9px 'Liberation Sans',sans-serif;color:#eff0f2;right:1273.80px;transform-origin:100% 0;transform:scaleX(1.1482);">Figueroa High</span>
<span class="t" style="top:613.00px;font:400 13.9px/13.9px 'Liberation Sans',sans-serif;color:#eff0f2;right:1273.80px;transform-origin:100% 0;transform:scaleX(1.1345);">School</span>
<span class="t" style="top:605.00px;font:400 13.9px/13.9px 'Liberation Sans',sans-serif;color:#eff0f2;right:1181.50px;transform-origin:100% 0;transform:scaleX(1.1778);">District</span>
<span class="t" style="top:605.00px;font:400 13.9px/13.9px 'Liberation Sans',sans-serif;color:#eff0f2;right:1074.00px;transform-origin:100% 0;transform:scaleX(1.1260);">2949</span>
<span class="t" style="top:605.00px;font:400 13.9px/13.9px 'Liberation Sans',sans-serif;color:#eff0f2;right:928.80px;transform-origin:100% 0;transform:scaleX(1.1023);">$1,884,411.00</span>
<span class="t" style="top:605.00px;font:400 13.9px/13.9px 'Liberation Sans',sans-serif;color:#eff0f2;right:802.40px;transform-origin:100% 0;transform:scaleX(1.1032);">$639.00</span>
<span class="t" style="top:605.00px;font:400 13.9px/13.9px 'Liberation Sans',sans-serif;color:#eff0f2;right:667.60px;transform-origin:100% 0;transform:scaleX(1.1293);">76.711767</span>
<span class="t" style="top:605.00px;font:400 13.9px/13.9px 'Liberation Sans',sans-serif;color:#eff0f2;right:520.30px;transform-origin:100% 0;transform:scaleX(1.1116);">81.158020</span>
<span class="t" style="top:605.00px;font:400 13.9px/13.9px 'Liberation Sans',sans-serif;color:#eff0f2;right:403.50px;transform-origin:100% 0;transform:scaleX(1.1116);">65.988471</span>
<span class="t" style="top:605.00px;font:400 13.9px/13.9px 'Liberation Sans',sans-serif;color:#eff0f2;right:275.00px;transform-origin:100% 0;transform:scaleX(1.1116);">80.739234</span>
<span class="t" style="top:605.00px;font:400 13.9px/13.9px 'Liberation Sans',sans-serif;color:#eff0f2;right:150.80px;transform-origin:100% 0;transform:scaleX(1.1116);">53.204476</span>
<span class="t" style="top:595.00px;font:400 13.9px/13.9px 'Liberation Sans',sans-serif;color:#eff0f2;right:23.50px;transform-origin:100% 0;transform:scaleX(1.1214);">Large (2000-</span>
<span class="t" style="top:613.00px;font:400 13.9px/13.9px 'Liberation Sans',sans-serif;color:#eff0f2;right:23.50px;transform-origin:100% 0;transform:scaleX(1.1201);">5000)</span>
<span class="t" style="top:649.00px;font:400 13.9px/13.9px 'Liberation Sans',sans-serif;color:#eff0f2;right:1273.80px;transform-origin:100% 0;transform:scaleX(1.1442);">Ford High School</span>
<span class="t" style="top:649.00px;font:400 13.9px/13.9px 'Liberation Sans',sans-serif;color:#eff0f2;right:1181.50px;transform-origin:100% 0;transform:scaleX(1.1778);">District</span>
<span class="t" style="top:649.00px;font:400 13.9px/13.9px 'Liberation Sans',sans-serif;color:#eff0f2;right:1074.00px;transform-origin:100% 0;transform:scaleX(1.1260);">2739</span>
<span class="t" style="top:649.00px;font:400 13.9px/13.9px 'Liberation Sans',sans-serif;color:#eff0f2;right:928.80px;transform-origin:100% 0;transform:scaleX(1.0896);">$1,763,916.00</span>
<span class="t" style="top:649.00px;font:400 13.9px/13.9px 'Liberation Sans',sans-serif;color:#eff0f2;right:802.40px;transform-origin:100% 0;transform:scaleX(1.1032);">$644.00</span>
<span class="t" style="top:649.00px;font:400 13.9px/13.9px 'Liberation Sans',sans-serif;color:#eff0f2;right:667.60px;transform-origin:100% 0;transform:scaleX(1.1116);">77.102592</span>
<span class="t" style="top:649.00px;font:400 13.9px/13.9px 'Liberation Sans',sans-serif;color:#eff0f2;right:520.30px;transform-origin:100% 0;transform:scaleX(1.1116);">80.746258</span>
<span class="t" style="top:649.00px;font:400 13.9px/13.9px 'Liberation Sans',sans-serif;color:#eff0f2;right:403.50px;transform-origin:100% 0;transform:scaleX(1.1116);">68.309602</span>
<span class="t" style="top:649.00px;font:400 13.9px/13.9px 'Liberation Sans',sans-serif;color:#eff0f2;right:275.00px;transform-origin:100% 0;transform:scaleX(1.1116);">79.299014</span>
<span class="t" style="top:649.00px;font:400 13.9px/13.9px 'Liberation Sans',sans-serif;color:#eff0f2;right:150.80px;transform-origin:100% 0;transform:scaleX(1.1116);">54.289887</span>
<span class="t" style="top:640.00px;font:400 13.9px/13.9px 'Liberation Sans',sans-serif;color:#eff0f2;right:23.50px;transform-origin:100% 0;transform:scaleX(1.1214);">Large (2000-</span>
<span class="t" style="top:658.00px;font:400 13.9px/13.9px 'Liberation Sans',sans-serif;color:#eff0f2;right:23.50px;transform-origin:100% 0;transform:scaleX(1.1201);">5000)</span>
<span class="t" style="top:684.00px;font:400 13.9px/13.9px 'Liberation Sans',sans-serif;color:#eff0f2;right:1273.80px;transform-origin:100% 0;transform:scaleX(1.1873);">Griffin High</span>
<span class="t" style="top:702.00px;font:400 13.9px/13.9px 'Liberation Sans',sans-serif;color:#eff0f2;right:1273.80px;transform-origin:100% 0;transform:scaleX(1.1345);">School</span>
<span class="t" style="top:693.00px;font:400 13.9px/13.9px 'Liberation Sans',sans-serif;color:#eff0f2;right:1181.50px;transform-origin:100% 0;transform:scaleX(1.1440);">Charter</span>
<span class="t" style="top:693.00px;font:400 13.9px/13.9px 'Liberation Sans',sans-serif;color:#eff0f2;right:1074.00px;transform-origin:100% 0;transform:scaleX(1.1260);">1468</span>
<span class="t" style="top:693.00px;font:400 13.9px/13.9px 'Liberation Sans',sans-serif;color:#eff0f2;right:928.80px;transform-origin:100% 0;transform:scaleX(1.0770);">$917,500.00</span>
<span class="t" style="top:693.00px;font:400 13.9px/13.9px 'Liberation Sans',sans-serif;color:#eff0f2;right:802.40px;transform-origin:100% 0;transform:scaleX(1.1032);">$625.00</span>
<span class="t" style="top:693.00px;font:400 13.9px/13.9px 'Liberation Sans',sans-serif;color:#eff0f2;right:667.60px;transform-origin:100% 0;transform:scaleX(1.1116);">83.351499</span>
<span class="t" style="top:693.00px;font:400 13.9px/13.9px 'Liberation Sans',sans-serif;color:#eff0f2;right:520.30px;transform-origin:100% 0;transform:scaleX(1.1116);">83.816757</span>
<span class="t" style="top:693.00px;font:400 13.9px/13.9px 'Liberation Sans',sans-serif;color:#eff0f2;right:403.50px;transform-origin:100% 0;transform:scaleX(1.1116);">93.392371</span>
<span class="t" style="top:693.00px;font:400 13.9px/13.9px 'Liberation Sans',sans-serif;color:#eff0f2;right:275.00px;transform-origin:100% 0;transform:scaleX(1.1116);">97.138965</span>
<span class="t" style="top:693.00px;font:400 13.9px/13.9px 'Liberation Sans',sans-serif;color:#eff0f2;right:150.80px;transform-origin:100% 0;transform:scaleX(1.1116);">90.599455</span>
<span class="t" style="top:684.00px;font:400 13.9px/13.9px 'Liberation Sans',sans-serif;color:#eff0f2;right:23.50px;transform-origin:100% 0;transform:scaleX(1.1668);">Medium (1000-</span>
<span class="t" style="top:702.00px;font:400 13.9px/13.9px 'Liberation Sans',sans-serif;color:#eff0f2;right:23.50px;transform-origin:100% 0;transform:scaleX(1.1201);">2000)</span>
</section>
</body></html>
